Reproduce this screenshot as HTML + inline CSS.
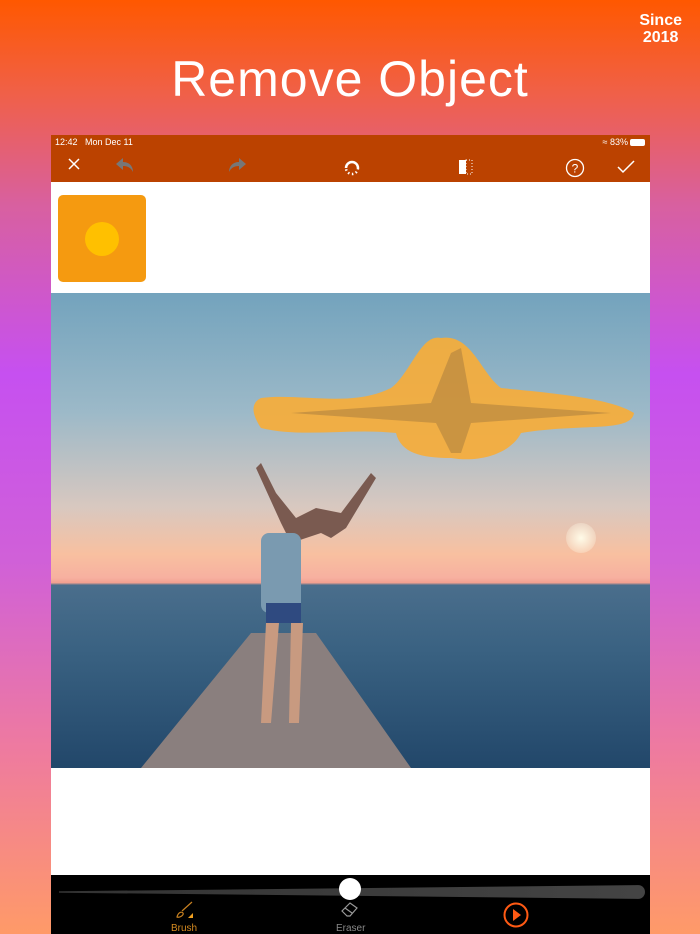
<!DOCTYPE html><html><head><meta charset="utf-8"><style>
*{margin:0;padding:0;box-sizing:border-box}
body{width:700px;height:934px;overflow:hidden;position:relative;font-family:"Liberation Sans",sans-serif;
background:linear-gradient(180deg,#ff5800 0%,#f06048 10%,#d860a0 22%,#c650f0 40%,#d060d8 60%,#ee7aa0 80%,#ff9a68 100%)}
.since{position:absolute;right:18px;top:12px;color:#fff;font-weight:bold;font-size:16px;line-height:17px;text-align:center}
h1{position:absolute;top:50px;left:0;width:700px;text-align:center;color:#fff;font-size:50px;font-weight:normal;letter-spacing:1px}
.dev{position:absolute;left:51px;top:135px;width:599px;height:799px;background:#fff}
.bar{background:#bb4200;height:47px;position:relative;color:#fff}
.st{position:absolute;top:2px;font-size:9px}
.ic{position:absolute;top:22px}
.photo{position:absolute;top:158px;left:0;width:599px;height:475px;overflow:hidden;
background:linear-gradient(180deg,#73a3bd 0%,#9cb9c8 25%,#d8c8c0 45%,#f8c0a0 55%,#f7b0a0 60%,#f2a090 61%,#4a6e8c 61.5%,#3a6282 75%,#22476a 100%)}
.bot{position:absolute;top:740px;left:0;width:599px;height:59px;background:#000}
</style></head><body>
<div class="since">Since<br>2018</div>
<h1>Remove Object</h1>
<div class="dev">
<div class="bar">
<span class="st" style="left:4px">12:42 &nbsp; Mon Dec 11</span>
<span class="st" style="right:22px">&#8776; 83%</span>
<span style="position:absolute;right:5px;top:4px;width:15px;height:7px;border:1px solid #fff;border-radius:2px;background:#fff"></span>
<svg class="ic" style="left:16px" width="14" height="14" stroke="#fff" stroke-width="1.5"><path d="M2 2L12 12M12 2L2 12"/></svg>
<svg class="ic" style="left:64px" width="20" height="16"><path d="M1 7L8 1V5C14 5 18 9 18 15C16 11 13 9 8 9V13Z" fill="#777"/></svg>
<svg class="ic" style="left:176px" width="20" height="16"><path d="M19 7L12 1V5C6 5 2 9 2 15C4 11 7 9 12 9V13Z" fill="#777"/></svg>
<svg class="ic" style="left:292px;top:24px" width="18" height="18" fill="none" stroke="#fff" stroke-width="2.5"><path d="M3 9A6 6 0 0 1 15 9" /><path d="M15 9A6 6 0 0 1 3 9" stroke-dasharray="1.5 2.5"/></svg>
<svg class="ic" style="left:408px;top:24px" width="14" height="16"><rect x="0" y="1" width="7" height="14" fill="#fff"/><rect x="7" y="1" width="6" height="14" fill="none" stroke="#fff" stroke-dasharray="1 2"/></svg>
<svg class="ic" style="left:514px;top:23px" width="20" height="20" fill="none" stroke="#fff" stroke-width="1.3"><circle cx="10" cy="10" r="8.5"/><text x="10" y="14.5" font-size="12" text-anchor="middle" fill="#fff" stroke="none" font-family="Liberation Sans">?</text></svg>
<svg class="ic" style="left:566px;top:25px" width="18" height="14" fill="none" stroke="#fff" stroke-width="1.5"><path d="M1 7L6 12L17 1"/></svg>
</div>
<div style="position:absolute;left:7px;top:60px;width:88px;height:87px;border-radius:5px;background:#f59a10">
<div style="position:absolute;left:27px;top:27px;width:34px;height:34px;border-radius:50%;background:#ffc000"></div></div>
<div class="photo">
<div style="position:absolute;left:515px;top:230px;width:30px;height:30px;border-radius:50%;background:radial-gradient(#fffbe8,rgba(255,240,200,0))"></div>
<svg width="599" height="475" style="position:absolute;left:0;top:0">
<path d="M90 475L200 340L265 340L360 475Z" fill="#8a7f7e"/>
<path d="M210 105C250 100 300 115 340 95C360 80 370 40 390 45C420 40 430 80 450 95C500 100 560 105 583 120C580 140 530 130 470 140C460 160 430 170 400 165C370 165 350 160 345 140C300 135 250 145 210 135C200 120 200 110 210 105Z" fill="#f6ad3a" opacity=".92"/>
<path d="M240 120L380 110L400 60L410 55L420 110L560 120L420 130L410 160L400 160L385 130Z" fill="#b08240" opacity=".6"/>
<path d="M205 175L230 230L240 250L255 245L270 240L280 245L295 235L325 185L320 180L290 220L265 215L245 225L225 200L210 170Z" fill="#7a5a50"/>
<rect x="210" y="240" width="40" height="80" rx="8" fill="#7a9ab0"/>
<rect x="215" y="310" width="35" height="20" fill="#2f4a80"/>
<path d="M215 330L210 430L220 430L228 330ZM240 330L238 430L248 430L252 330Z" fill="#c89a80"/>
</svg>
</div>
<div class="bot">
<div style="position:absolute;left:8px;top:10px;width:586px;height:14px;background:linear-gradient(90deg,#333 0%,#444 100%);clip-path:polygon(0 45%,100% 0,100% 100%,0 55%);border-radius:7px"></div>
<div style="position:absolute;left:288px;top:3px;width:22px;height:22px;border-radius:50%;background:#fff"></div>
<svg style="position:absolute;left:123px;top:26px" width="20" height="18" fill="none" stroke="#c78020" stroke-width="1.2"><path d="M18 1L8 10M3 16C4 12 7 10 9 12C10 14 6 17 3 16Z"/><path d="M14 17L19 12V17Z" fill="#f0a020" stroke="none"/></svg>
<div style="position:absolute;left:120px;top:48px;font-size:10px;color:#d48a20">Brush</div>
<svg style="position:absolute;left:290px;top:26px" width="18" height="16" fill="none" stroke="#999" stroke-width="1.2"><path d="M6 15L1 10L9 2L16 7L9 15Z M4 7L11 12"/></svg>
<div style="position:absolute;left:285px;top:48px;font-size:10px;color:#888">Eraser</div>
<svg style="position:absolute;left:452px;top:27px" width="26" height="26"><circle cx="13" cy="13" r="11.5" fill="none" stroke="#ff5a14" stroke-width="2"/><path d="M10 7L18 13L10 19Z" fill="#ff5a14"/></svg>
</div>
</div>
</body></html>
